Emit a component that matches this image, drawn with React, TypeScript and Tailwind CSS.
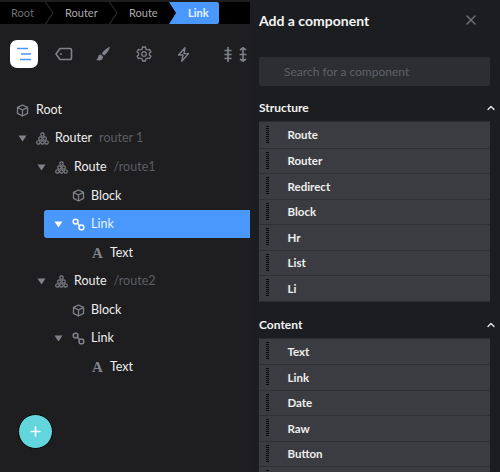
import type { ReactNode } from 'react'
import { ChevronUp, Plus, X } from 'lucide-react'

const STRUCTURE = ['Route', 'Router', 'Redirect', 'Block', 'Hr', 'List', 'Li']
const CONTENT = ['Text', 'Link', 'Date', 'Raw', 'Button', '']

function BoxIcon({ color = '#80838b' }: { color?: string }) {
  return (
    <svg width="13" height="13" viewBox="0 0 13 13" fill="none" stroke={color} strokeWidth="1.3" strokeLinejoin="round">
      <path d="M6.5 1 11.5 3.4V9.4L6.5 12 1.5 9.4V3.4Z" />
      <path d="M1.5 3.4 6.5 6 11.5 3.4M6.5 6V12" />
    </svg>
  )
}

function TreeIcon({ color = '#80838b' }: { color?: string }) {
  return (
    <svg width="13" height="13" viewBox="0 0 13 13" fill="none" stroke={color} strokeWidth="1.1">
      <circle cx="6.5" cy="2.6" r="1.7" />
      <circle cx="4.4" cy="6.6" r="1.7" />
      <circle cx="8.6" cy="6.6" r="1.7" />
      <circle cx="2.4" cy="10.4" r="1.7" />
      <circle cx="6.5" cy="10.4" r="1.7" />
      <circle cx="10.6" cy="10.4" r="1.7" />
    </svg>
  )
}

function LinkIcon({ color = '#80838b' }: { color?: string }) {
  return (
    <svg width="13" height="13" viewBox="0 0 13 13" fill="none" stroke={color} strokeWidth="1.5">
      <circle cx="3.6" cy="3.6" r="2.4" />
      <circle cx="9.4" cy="9.4" r="2.4" />
      <path d="M5.3 5.3 7.7 7.7" />
    </svg>
  )
}

function TextIcon() {
  return <span className="w-[13px] text-center font-['Liberation_Serif',serif] text-[15px] leading-none font-bold text-[#80838b]">A</span>
}

function Caret({ color = '#80838b' }: { color?: string }) {
  return (
    <svg width="9" height="7" viewBox="0 0 9 7" fill={color}>
      <path d="M0.5 0.5H8.5L4.5 6.5Z" />
    </svg>
  )
}

function TreeRow({
  indent,
  caret,
  icon,
  label,
  note,
  selected,
}: {
  indent: string
  caret?: boolean
  icon: ReactNode
  label: string
  note?: string
  selected?: boolean
}) {
  return (
    <div className={`flex h-[28.55px] items-center ${indent}`}>
      <div className={`flex h-[28px] flex-1 items-center rounded-l-[3px] ${selected ? 'bg-[#4a98fb]' : ''}`}>
        <div className="flex w-[28px] shrink-0 justify-center pl-[1px]">
          {caret && <Caret color={selected ? '#ffffff' : '#80838b'} />}
        </div>
        <div className="flex w-[13px] shrink-0 justify-center">{icon}</div>
        <span className={`ml-[6px] text-[12.5px] ${selected ? 'text-[#e6f0ff]' : 'text-[#eeeeee]'}`}>{label}</span>
        {note && <span className="ml-[7px] text-[12.5px] text-[#5b5d63]">{note}</span>}
      </div>
    </div>
  )
}

function DragHandle() {
  return <div className="h-[18px] w-[2.5px] bg-[repeating-linear-gradient(#08080a_0_1px,transparent_1px_2px)]" />
}

function Section({ title, items }: { title: string; items: string[] }) {
  return (
    <div className="mb-[14px] shrink-0">
      <div className="mb-[4px] flex h-[18px] items-center justify-between pr-[3px] pl-[9px]">
        <span className="text-[12px] font-bold text-[#f2f2f2]">{title}</span>
        <ChevronUp size={12} strokeWidth={2.5} className="text-[#eeeeee]" />
      </div>
      <div className="mr-[10px] ml-[9px] border-y border-[#2c2d31] bg-[#3b3c41]">
        {items.map((item, i) => (
          <div key={i} className={`flex h-[25.5px] items-center pl-[7px] ${i > 0 ? 'border-t border-[#2f3034]' : ''}`}>
            <DragHandle />
            <span className="ml-[19px] text-[11.5px] font-bold text-[#eeeeee]">{item}</span>
          </div>
        ))}
      </div>
    </div>
  )
}

export default function App() {
  return (
    <div className="relative flex h-[472px] w-[500px] overflow-hidden bg-[#1e1e20] font-['Lato',sans-serif]">
      <div className="flex w-[250px] shrink-0 flex-col">
        <div className="mt-[2px] flex h-[22px] items-center bg-[#000000] text-[11px]">
          <span className="ml-[11px] w-[34px] text-[#6e6e70]">Root</span>
          <svg width="9" height="22" viewBox="0 0 9 22" fill="none" stroke="#36373a">
            <path d="M0.5 0 8 11 0.5 22" />
          </svg>
          <span className="ml-[11px] w-[44px] text-[#a9a9ab]">Router</span>
          <svg width="9" height="22" viewBox="0 0 9 22" fill="none" stroke="#36373a">
            <path d="M0.5 0 8 11 0.5 22" />
          </svg>
          <span className="ml-[11px] w-[40px] text-[#a9a9ab]">Route</span>
          <div className="flex h-[22px] w-[50px] items-center rounded-r-[2px] bg-[#4a98fb] pl-[19px] font-bold text-[#e6f0ff] [clip-path:polygon(0_0,100%_0,100%_100%,0_100%,7px_50%)]">
            Link
          </div>
        </div>

        <div className="mt-[16px] flex h-[28px] items-center pl-[10px]">
          <div className="flex h-[28px] w-[28px] items-center justify-center rounded-[7px] bg-white">
            <svg width="16" height="14" viewBox="0 0 16 14" fill="none" stroke="#4a98fb" strokeWidth="1.5">
              <path d="M1 1.5H12M5 7H15M4 12.5H15" />
            </svg>
          </div>
          <svg className="ml-[17px]" width="18" height="14" viewBox="0 0 18 14" fill="none" stroke="#80838b" strokeWidth="1.6">
            <path d="M5 1.5H15A1.5 1.5 0 0 1 16.5 3V11A1.5 1.5 0 0 1 15 12.5H5L1 7Z" strokeLinejoin="round" />
            <circle cx="6" cy="7" r="0.9" fill="#80838b" stroke="none" />
          </svg>
          <svg className="ml-[22px]" width="16" height="16" viewBox="0 0 16 16" fill="#80838b">
            <path d="M15 0.8C12.5 1.6 8.8 4.6 6.8 7.6L9 9.6C11.6 7.6 14.6 3.6 15 0.8Z" />
            <path d="M5.8 8.6C3.8 8.8 3.2 10.2 2.8 12C2.6 13 1.8 13.4 0.8 13.6C3 15 6.4 15 7.6 12.6C8.2 11.4 8 10.4 7.8 10.2Z" />
          </svg>
          <svg className="ml-[25px]" width="16" height="16" viewBox="0 0 16 16" fill="none" stroke="#80838b" strokeWidth="1.3" strokeLinejoin="round">
            <path d="M6.6 1H9.4L9.8 3 11.6 4 13.5 3.3 15 5.8 13.4 7.1V8.9L15 10.2 13.5 12.7 11.6 12 9.8 13 9.4 15H6.6L6.2 13 4.4 12 2.5 12.7 1 10.2 2.6 8.9V7.1L1 5.8 2.5 3.3 4.4 4 6.2 3Z" />
            <circle cx="8" cy="8" r="2.3" />
          </svg>
          <svg className="ml-[25px]" width="13" height="15" viewBox="0 0 13 15" fill="none" stroke="#80838b" strokeWidth="1.4" strokeLinejoin="round">
            <path d="M8 0.8 1.5 8H6L4.8 14.2 11.5 6.6H7Z" />
          </svg>
          <svg className="ml-[34px]" width="8" height="15" viewBox="0 0 8 15" fill="none" stroke="#80838b" strokeWidth="1.6">
            <path d="M4 0V15M0.5 3.5H7.5M0.5 7.5H7.5M0.5 11.5H7.5" />
          </svg>
          <svg className="ml-[7px]" width="8" height="15" viewBox="0 0 8 15" fill="none" stroke="#80838b" strokeWidth="1.6">
            <path d="M4 0.5V14.5M1 3 4 0.8 7 3M1 12 4 14.2 7 12M0.5 7.5H7.5" />
          </svg>
        </div>

        <div className="mt-[28px]">
          <div className="flex h-[28.55px] items-center pl-[16px]">
            <BoxIcon />
            <span className="ml-[7px] text-[12.5px] text-[#eeeeee]">Root</span>
          </div>
          <TreeRow indent="pl-[8px]" caret icon={<TreeIcon />} label="Router" note="router 1" />
          <TreeRow indent="pl-[27px]" caret icon={<TreeIcon />} label="Route" note="/route1" />
          <TreeRow indent="pl-[44px]" icon={<BoxIcon />} label="Block" />
          <TreeRow indent="pl-[44px]" caret selected icon={<LinkIcon color="#ffffff" />} label="Link" />
          <TreeRow indent="pl-[63px]" icon={<TextIcon />} label="Text" />
          <TreeRow indent="pl-[27px]" caret icon={<TreeIcon />} label="Route" note="/route2" />
          <TreeRow indent="pl-[44px]" icon={<BoxIcon />} label="Block" />
          <TreeRow indent="pl-[44px]" caret icon={<LinkIcon />} label="Link" />
          <TreeRow indent="pl-[63px]" icon={<TextIcon />} label="Text" />
        </div>
      </div>

      <div className="flex min-w-0 flex-1 flex-col bg-[#1c1d20]">
        <div className="mt-[9px] flex h-[22px] shrink-0 items-center justify-between pr-[21px] pl-[9px]">
          <span className="text-[14px] font-bold text-[#f5f5f5]">Add a component</span>
          <X size={16} strokeWidth={2} className="text-[#70737b]" />
        </div>
        <div className="mt-[26px] mr-[10px] ml-[9px] flex h-[29px] shrink-0 items-center rounded-[2px] bg-[#2d2e32] pl-[25px] text-[12px] text-[#5f6167]">
          Search for a component
        </div>
        <div className="mt-[13px] shrink-0">
          <Section title="Structure" items={STRUCTURE} />
          <Section title="Content" items={CONTENT} />
        </div>
      </div>

      <button className="absolute top-[414px] left-[18px] flex h-[35px] w-[35px] items-center justify-center rounded-full border border-black bg-[#62d6dc] text-white">
        <Plus size={15} strokeWidth={2.5} />
      </button>
    </div>
  )
}
